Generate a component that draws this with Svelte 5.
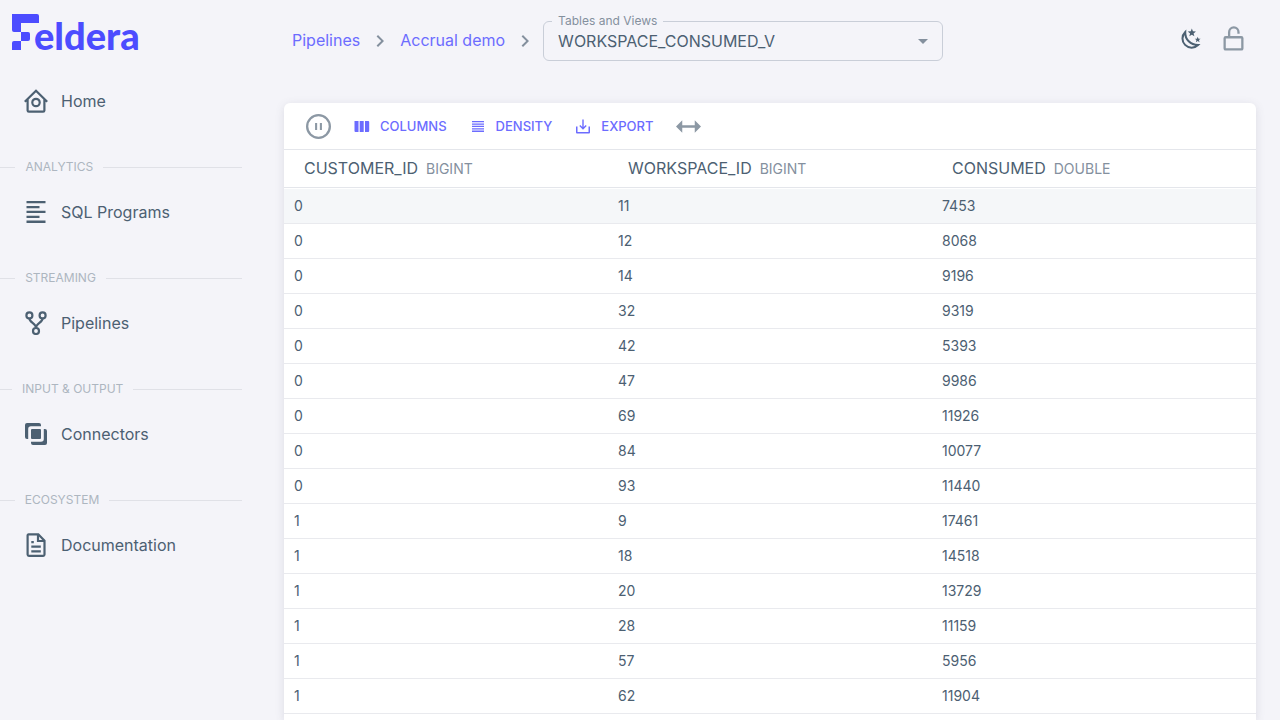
<script>
  const sections = [
    { title: 'ANALYTICS', label: 'SQL Programs', icon: 'sql' },
    { title: 'STREAMING', label: 'Pipelines', icon: 'pipelines' },
    { title: 'INPUT & OUTPUT', label: 'Connectors', icon: 'connectors' },
    { title: 'ECOSYSTEM', label: 'Documentation', icon: 'docs' }
  ];
  const columns = [
    { name: 'CUSTOMER_ID', type: 'BIGINT' },
    { name: 'WORKSPACE_ID', type: 'BIGINT' },
    { name: 'CONSUMED', type: 'DOUBLE' }
  ];
  const rows = [
    [0, 11, 7453], [0, 12, 8068], [0, 14, 9196], [0, 32, 9319], [0, 42, 5393],
    [0, 47, 9986], [0, 69, 11926], [0, 84, 10077], [0, 93, 11440], [1, 9, 17461],
    [1, 18, 14518], [1, 20, 13729], [1, 28, 11159], [1, 57, 5956], [1, 62, 11904]
  ];
</script>

{#snippet navIcon(name)}
  <svg class="nav-icon" viewBox="0 0 24 24" aria-hidden="true">
    {#if name === 'home'}
      <path class="line" d="M.8 12.800 12 1.700l11.200 11.100M3.600 10.500v10.900q0 1.300 1.300 1.300h14.200q1.300 0 1.300-1.300V10.500" />
      <circle class="line" cx="12" cy="13.500" r="3.700" />
    {:else if name === 'sql'}
      <path d="M2.500 1h19v2.300h-19zM2.500 5.900h13v2.300h-13zM2.500 10.800h19v2.300h-19zM2.500 15.700h13V18h-13zM2.500 20.600h19v2.300h-19z" />
    {:else if name === 'pipelines'}
      <circle class="line" cx="5.400" cy="4.400" r="3" />
      <circle class="line" cx="18.600" cy="4.400" r="3" />
      <circle class="line" cx="12" cy="20" r="3" />
      <path class="line" d="M5.400 7.500c0 4 6.600 5 6.600 9.300 0-4.300 6.600-5.300 6.600-9.300" />
    {:else if name === 'connectors'}
      <rect x="7" y="7" width="10" height="10" rx="1" />
      <path d="M3 1h12q2 0 2 2v1.200H7q-2.800 0-2.800 2.800v10H3q-2 0-2-2V3q0-2 2-2z" />
      <path d="M19.800 7H21q2 0 2 2v12q0 2-2 2H9q-2 0-2-2v-1.200h10q2.800 0 2.800-2.800z" />
    {:else}
      <path class="line" d="M4.600 1.300h9.700l6.200 6.500v13.700q0 1.300-1.300 1.300H4.900q-1.300 0-1.300-1.300V2.500q0-1.200 1-1.200z" />
      <path class="line" d="M14 1.500V8h6.500" />
      <path d="M7.300 8h2.500v2.200H7.300zM7.300 12.500h9.500v2.200H7.300zM7.300 17.300h9.500v2.200H7.300z" />
    {/if}
  </svg>
{/snippet}

{#snippet chevron()}
  <svg class="chevron" viewBox="0 0 24 24" aria-hidden="true">
    <path d="M8.600 16.600 13.200 12 8.600 7.400 10 6l6 6-6 6z" />
  </svg>
{/snippet}

<div class="app">
  <aside>
    <a class="logo" href="#home">
      <svg viewBox="0 0 27 36" aria-hidden="true">
        <path d="M0 0h25q2 0 2 2v7H9v9H2q-2 0-2-2z" />
        <path d="M9 18h7q2 0 2 2v5q0 2-2 2H9zM2 27h7v9H0v-7q0-2 2-2z" />
      </svg><span>eldera</span>
    </a>
    <nav>
      <a class="nav-link" href="#home">{@render navIcon('home')}Home</a>
      {#each sections as section}
        <div class="section-title"><span>{section.title}</span></div>
        <a class="nav-link" href="#{section.icon}">{@render navIcon(section.icon)}{section.label}</a>
      {/each}
    </nav>
  </aside>

  <main>
    <header>
      <div class="crumbs">
        <a href="#pipelines">Pipelines</a>
        {@render chevron()}
        <a href="#accrual">Accrual demo</a>
        {@render chevron()}
        <div class="field">
          <label for="relation">Tables and Views</label>
          <select id="relation"><option>WORKSPACE_CONSUMED_V</option></select>
          <svg class="caret" viewBox="0 0 24 24" aria-hidden="true"><path d="M7 10l5 5 5-5z" /></svg>
        </div>
      </div>
      <div class="actions">
        <button aria-label="Toggle dark mode">
          <svg class="moon" viewBox="0 0 24 24" aria-hidden="true">
            <path class="line" d="M6.800 4.300A9.400 9.400 0 1 0 20.800 18.600C12.500 18.500 6.500 12.500 6.800 4.300z" />
            <path d="m14 .5 1.200 3.100 3.300.2-2.600 2.100.9 3.200-2.800-1.800-2.800 1.800.9-3.200-2.600-2.100 3.300-.2zM20.400 9.500l.9 2.200 2.300.1-1.800 1.400.6 2.300-2-1.300-2 1.300.6-2.300-1.800-1.400 2.300-.1z" />
          </svg>
        </button>
        <button class="muted" aria-label="Unlock">
          <svg class="lock" viewBox="0 0 24 24" aria-hidden="true">
            <rect class="line" x="3.500" y="10.800" width="17" height="11.700" rx="1" />
            <path class="line" d="M7.800 10.800V5.900a4.500 4.500 0 0 1 9 0v1.500" />
          </svg>
        </button>
      </div>
    </header>

    <section class="card">
      <div class="toolbar">
        <button class="muted" aria-label="Pause">
          <svg class="large" viewBox="0 0 24 24" aria-hidden="true">
            <circle class="line" cx="12" cy="12" r="10.900" />
            <path d="M8.700 8.700h2v6.600h-2zM13.300 8.700h2v6.600h-2z" />
          </svg>
        </button>
        <button>
          <svg viewBox="0 0 18 18" aria-hidden="true"><path d="M1.500 4h4v11h-3q-1 0-1-1zM6.700 4h4v11h-4zM12 4h3.200q1 0 1 1v9q0 1-1 1H12z" /></svg>
          COLUMNS
        </button>
        <button>
          <svg viewBox="0 0 18 18" aria-hidden="true"><path d="M3 4h12v1.300H3zM3 6.400h12v1.300H3zM3 8.800h12v1.300H3zM3 11.200h12v1.300H3zM3 13.600h12v1.300H3z" /></svg>
          DENSITY
        </button>
        <button>
          <svg viewBox="0 0 18 18" aria-hidden="true"><path d="M14.500 9.500V15h-11V9.500H2v6q0 1 1 1h12q1 0 1-1v-6zM9.700 10l2-2 1 1L9 12.700 5.300 9l1-1 2 2V2.500h1.400z" /></svg>
          EXPORT
        </button>
        <button class="muted" aria-label="Fit column widths">
          <svg class="large" viewBox="0 0 24 24" aria-hidden="true"><path d="M0 12l6-6v4.800h12V6l6 6-6 6v-4.800H6V18z" /></svg>
        </button>
      </div>
      <table>
        <thead>
          <tr>
            {#each columns as column}
              <th scope="col">{column.name}<span>{column.type}</span></th>
            {/each}
          </tr>
        </thead>
        <tbody>
          {#each rows as row, index}
            <tr class:hovered={index === 0}>
              {#each row as value}<td>{value}</td>{/each}
            </tr>
          {/each}
        </tbody>
      </table>
    </section>
  </main>
</div>

<style>
  :global(body) {
    background: #f4f4f9;
  }
  .app {
    display: flex;
    height: 100vh;
    overflow: hidden;
    color: #4c6072;
    font: 16px/24px Inter, sans-serif;
  }
  a {
    color: inherit;
    text-decoration: none;
  }
  svg {
    display: block;
    flex: none;
    fill: currentColor;
  }
  .line {
    fill: none;
    stroke: currentColor;
    stroke-width: 2.2;
  }
  aside {
    flex: 0 0 260px;
  }
  .logo {
    display: flex;
    height: 66px;
    padding: 14px 0 0 12px;
    margin-bottom: 14px;
    box-sizing: border-box;
    color: #4c4cff;
    font: 900 38px/42px Lato, sans-serif;
  }
  .logo svg {
    width: 27px;
    height: 36px;
  }
  .logo span {
    margin-left: -5px;
  }
  nav {
    padding-right: 18px;
  }
  .nav-link {
    display: flex;
    align-items: center;
    gap: 13px;
    height: 42px;
    padding-left: 24px;
  }
  .nav-icon {
    width: 24px;
    height: 24px;
  }
  .section-title {
    display: flex;
    align-items: center;
    margin: 36px 0 15px;
    color: #adb6c0;
    font-size: 12px;
    line-height: 18px;
    white-space: nowrap;
  }
  .section-title span {
    padding: 0 10px;
  }
  .section-title::before,
  .section-title::after {
    content: '';
    width: 10%;
    border-top: 1px solid #e0e1e7;
  }
  .section-title::after {
    width: 90%;
  }
  main {
    display: flex;
    flex: 1;
    flex-direction: column;
    min-width: 0;
    padding: 0 24px;
  }
  header {
    display: flex;
    flex: none;
    align-items: center;
    justify-content: space-between;
    height: 82px;
    margin-bottom: 21px;
    padding: 0 8px;
  }
  .crumbs {
    display: flex;
    align-items: center;
    gap: 8px;
    color: #6c6cff;
  }
  .crumbs > a {
    padding-bottom: 2px;
  }
  .chevron {
    width: 24px;
    height: 24px;
    color: #84909e;
  }
  .field {
    position: relative;
    width: 400px;
    margin-left: -2px;
  }
  .field label {
    position: absolute;
    top: -9px;
    left: 9px;
    padding: 0 6px;
    background: #f4f4f9;
    color: #84909e;
    font-size: 12px;
    line-height: 18px;
  }
  select {
    display: block;
    width: 100%;
    height: 40px;
    padding: 0 36px 0 14px;
    border: 1px solid #c9ced8;
    border-radius: 6px;
    background: none;
    color: #4c6072;
    font: inherit;
    appearance: none;
  }
  .caret {
    position: absolute;
    top: 8px;
    right: 8px;
    width: 24px;
    color: #84909e;
    pointer-events: none;
  }
  .actions {
    display: flex;
    align-items: center;
    gap: 20px;
    padding: 0 2px 5px 0;
  }
  button {
    display: flex;
    align-items: center;
    gap: 9px;
    padding: 0;
    border: 0;
    background: none;
    color: inherit;
    font: inherit;
  }
  .muted {
    color: #8c98a4;
  }
  .moon {
    width: 22px;
    height: 22px;
  }
  .lock {
    width: 25px;
    height: 25px;
  }
  .card {
    flex: 1 0 auto;
    border-radius: 6px 6px 0 0;
    background: #fff;
    box-shadow: 0 2px 10px rgba(76, 78, 100, 0.14);
  }
  .toolbar {
    display: flex;
    align-items: center;
    gap: 22px;
    height: 46px;
    padding: 0 22px;
    border-bottom: 1px solid #e4e6eb;
    color: #6c6cff;
    font-size: 13px;
    font-weight: 500;
    line-height: 22px;
  }
  .toolbar svg {
    width: 18px;
    height: 18px;
  }
  .toolbar .large {
    width: 25px;
    height: 25px;
  }
  table {
    width: 100%;
    table-layout: fixed;
    border-collapse: separate;
    border-spacing: 0;
  }
  th {
    height: 37px;
    padding: 0 20px;
    border-bottom: 1px solid #e4e6eb;
    font-weight: 400;
    text-align: left;
  }
  th span {
    margin-left: 8px;
    color: #84909e;
    font-size: 14px;
  }
  tbody::before {
    content: '';
    display: table-row;
    height: 1px;
  }
  td {
    height: 34px;
    padding: 0 10px;
    border-bottom: 1px solid #e9eaee;
    font-size: 14px;
    line-height: 20px;
  }
  .hovered {
    background: #f5f7f9;
  }
</style>
